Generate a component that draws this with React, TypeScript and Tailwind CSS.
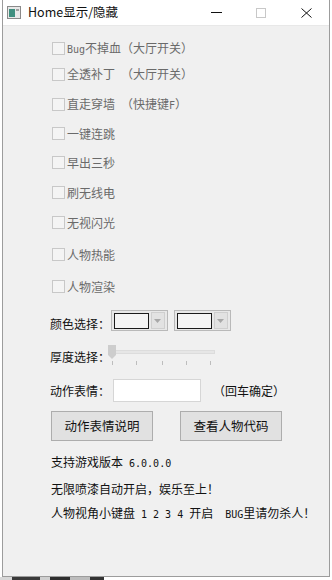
import React from "react";

const CJK = '"Noto Sans CJK SC", "Noto Sans", sans-serif';
const MONO = '"DejaVu Sans Mono", "Liberation Mono", monospace';

function M({ children }: { children: React.ReactNode }) {
  return (
    <span className="text-[10px] whitespace-pre" style={{ fontFamily: MONO }}>
      {children}
    </span>
  );
}

function Check({ label, mt }: { label: React.ReactNode; mt: string }) {
  return (
    <div className={`flex items-center h-[13px] ${mt}`}>
      <div className="w-[13px] h-[13px] border border-[#c8c8c8] bg-[#f4f4f4] shrink-0" />
      <span className="ml-[2px] text-[12px] leading-none text-[#6a6a6a] whitespace-pre" style={{ fontFamily: CJK }}>
        {label}
      </span>
    </div>
  );
}

function Combo() {
  return (
    <div className="flex items-center w-[57px] h-[21px] border border-[#b9b9b9] bg-[#e8e8e8] px-[2px]">
      <div className="w-[36px] h-[16px] border border-[#1a1a1a] bg-[#f4f4f4]" />
      <div className="ml-[2px] w-[15px] h-[17px] bg-[#e2e2e2] border border-[#cfcfcf] flex items-center justify-center">
        <svg width="7" height="4" viewBox="0 0 7 4">
          <path d="M0 0 L7 0 L3.5 4 Z" fill="#a8a8a8" />
        </svg>
      </div>
    </div>
  );
}

export default function App() {
  return (
    <div className="w-[332px] h-[580px] bg-white flex flex-col overflow-hidden">
      <div className="ml-[2px] w-[328px] h-[577px] flex flex-col border-l border-r border-b border-[#9c9c9c] shrink-0">
        {/* title bar */}
        <div className="h-[25px] bg-white flex items-center shrink-0">
          <svg className="ml-[4px]" width="14" height="13" viewBox="0 0 14 13">
            <rect x="0.5" y="0.5" width="13" height="12" fill="#e8e8e8" stroke="#8a8a8a" />
            <rect x="2" y="3" width="6" height="8" fill="#3f8f7f" />
            <rect x="9" y="3" width="3" height="2" fill="#a0a0a0" />
          </svg>
          <span className="ml-[7px] text-[12.5px] text-[#111]" style={{ fontFamily: CJK }}>
            Home显示/隐藏
          </span>
          <div className="flex-1" />
          <div className="w-[11px] h-[1px] bg-[#111] mr-[34px]" />
          <div className="w-[10px] h-[10px] border border-[#c8c8c8] mr-[35px]" />
          <svg className="mr-[17px]" width="11" height="10" viewBox="0 0 11 10">
            <path d="M0.5 0.5 L10.5 9.5 M10.5 0.5 L0.5 9.5" stroke="#111" strokeWidth="1" />
          </svg>
        </div>
        {/* body */}
        <div className="flex-1 bg-[#f0f0f0] flex flex-col pl-[49px] border-t border-[#e8e8e8]">
          <Check label={<><M>Bug</M>不掉血（大厅开关）</>} mt="mt-[16px]" />
          <Check label={<>全透补丁<M> </M>（大厅开关）</>} mt="mt-[13px]" />
          <Check label={<>直走穿墙<M> </M>（快捷键<M>F</M>）</>} mt="mt-[17px]" />
          <Check label="一键连跳" mt="mt-[16px]" />
          <Check label="早出三秒" mt="mt-[16px]" />
          <Check label="刷无线电" mt="mt-[17px]" />
          <Check label="无视闪光" mt="mt-[17px]" />
          <Check label="人物热能" mt="mt-[19px]" />
          <Check label="人物渲染" mt="mt-[19px]" />

          {/* color row */}
          <div className="flex items-center mt-[17px] -ml-[2px] text-[12px] text-[#111]" style={{ fontFamily: CJK }}>
            <span className="w-[61px] pt-[6px] leading-none whitespace-nowrap">颜色选择：</span>
            <Combo />
            <div className="w-[6px]" />
            <Combo />
          </div>

          {/* slider row */}
          <div className="flex mt-[14px] -ml-[2px] text-[12px] text-[#111]" style={{ fontFamily: CJK }}>
            <span className="w-[58px] pt-[6px] leading-none whitespace-nowrap">厚度选择：</span>
            <div className="relative w-[108px] h-[22px]">
              <div className="absolute left-0 top-[5px] w-[107px] h-[4px] bg-[#e6e6e6] border border-[#dcdcdc]" />
              <svg className="absolute left-0 top-0" width="8" height="14" viewBox="0 0 8 14">
                <path d="M0 0 H8 V10 L4 14 L0 10 Z" fill="#cdcdcd" />
              </svg>
              {[4, 28, 54, 78, 102].map((x) => (
                <div key={x} className="absolute top-[16px] w-[1px] h-[4px] bg-[#bdbdbd]" style={{ left: x }} />
              ))}
            </div>
          </div>

          {/* action row */}
          <div className="flex items-center mt-[12px] -ml-[2px] text-[12px] text-[#111]" style={{ fontFamily: CJK }}>
            <span className="w-[63px] leading-none whitespace-nowrap">动作表情：</span>
            <div className="w-[88px] h-[23px] bg-white border border-[#d6d6d6]" />
            <span className="ml-[12px] leading-none">（回车确定）</span>
          </div>

          {/* buttons */}
          <div className="flex mt-[9px] -ml-[1px] text-[12.5px] text-[#111]" style={{ fontFamily: CJK }}>
            <div className="w-[102px] h-[30px] bg-[#e1e1e1] border border-[#adadad] flex items-center justify-center">
              动作表情说明
            </div>
            <div className="ml-[27px] w-[102px] h-[30px] bg-[#e1e1e1] border border-[#adadad] flex items-center justify-center">
              查看人物代码
            </div>
          </div>

          {/* info texts */}
          <div className="flex flex-col -ml-[1px] text-[12px] leading-none text-[#111] whitespace-pre" style={{ fontFamily: CJK }}>
            <span className="mt-[15px]">支持游戏版本<M> 6.0.0.0</M></span>
            <span className="mt-[14px]">无限喷漆自动开启，娱乐至上！</span>
            <span className="mt-[12px]">人物视角小键盘<M> 1 2 3 4 </M>开启<M>  BUG</M>里请勿杀人！</span>
          </div>
        </div>
      </div>
      <div className="flex h-[3px]">
        <div className="w-[12px] bg-[#d8d8d8]" />
        <div className="w-[28px] bg-[#3a3a3a]" />
        <div className="w-[10px] bg-[#cfcfcf]" />
        <div className="w-[20px] bg-[#2e2e2e]" />
        <div className="w-[20px] bg-[#bcbcbc]" />
        <div className="w-[14px] bg-[#333]" />
      </div>
    </div>
  );
}
